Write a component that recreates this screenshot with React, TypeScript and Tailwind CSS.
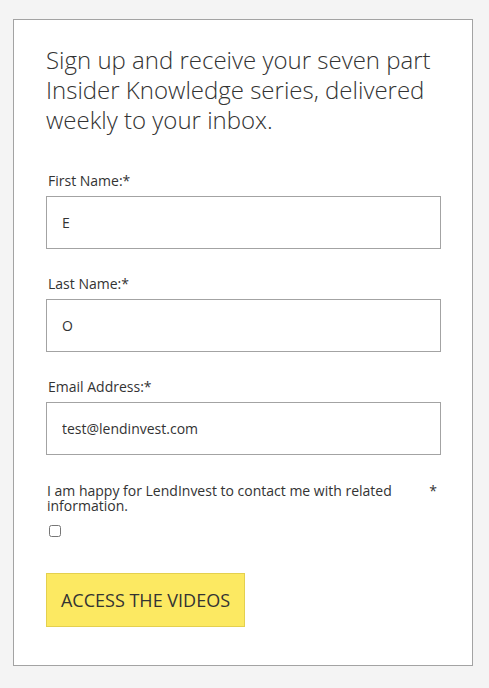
import { useState } from "react";

const fields = [
  { label: "First Name:*", value: "E" },
  { label: "Last Name:*", value: "O" },
  { label: "Email Address:*", value: "test@lendinvest.com" },
];

export default function App() {
  const [values, setValues] = useState(fields.map((f) => f.value));
  const [agree, setAgree] = useState(false);

  return (
    <div
      className="min-h-[688px] bg-[#f4f4f4] pl-[13px] pr-[16px] pt-[19px]"
      style={{ fontFamily: '"Open Sans", "Liberation Sans", sans-serif' }}
    >
      <div className="w-[460px] border border-[#a3a3a3] bg-white pb-[38px] pl-[32px] pr-[31px] pt-[25px] text-[#333]">
        <h2 className="text-[24px] font-light leading-[30px] text-[#333]">
          Sign up and receive your seven part Insider Knowledge series, delivered weekly to your inbox.
        </h2>

        <form className="mt-[36px]" onSubmit={(e) => e.preventDefault()}>
          {fields.map((f, i) => (
            <div key={f.label} className="mb-[25px]">
              <label className="mb-[5px] block pl-[2px] text-[14px] leading-[20px]">{f.label}</label>
              <input
                value={values[i]}
                onChange={(e) => setValues(values.map((v, j) => (j === i ? e.target.value : v)))}
                className="block h-[53px] w-full border border-[#a3a3a3] bg-white px-[15px] text-[14px] text-[#333] outline-none"
              />
            </div>
          ))}

          <div className="flex items-start justify-between pl-[1px] pt-[3px]">
            <span className="w-[370px] text-[14px] leading-[15px]">
              I am happy for LendInvest to contact me with related information.
            </span>
            <span className="pr-[4px] text-[14px] leading-[15px]">*</span>
          </div>
          <input
            type="checkbox"
            checked={agree}
            onChange={(e) => setAgree(e.target.checked)}
            className="ml-[3px] mt-[12px] block h-[12px] w-[12px]"
          />

          <button
            type="submit"
            className="mt-[36px] h-[54px] w-[199px] border border-[#e4d04e] bg-[#fce962] text-[18px] leading-none text-[#333]"
          >
            ACCESS THE VIDEOS
          </button>
        </form>
      </div>
    </div>
  );
}
